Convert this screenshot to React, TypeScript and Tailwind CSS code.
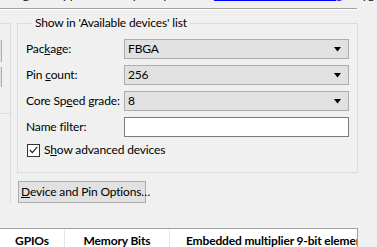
import React from "react";

const font = { fontFamily: 'Lato, "Noto Sans", Arial, sans-serif' };

function Combo({ value }: { value: string }) {
  return (
    <div className="flex h-[20px] w-[225px] items-center justify-between border border-[#adadad] bg-[#e1e1e1] pl-[3px] pr-[6px]">
      <span>{value}</span>
      <svg width="8" height="5" viewBox="0 0 8 5">
        <path d="M0 0H7L3.5 4.5Z" fill="#000" />
      </svg>
    </div>
  );
}

function Row({ label, children }: { label: React.ReactNode; children: React.ReactNode }) {
  return (
    <div className="flex items-center">
      <div className="w-[98px] shrink-0 whitespace-nowrap">{label}</div>
      {children}
    </div>
  );
}

export default function App() {
  return (
    <div
      className="h-[247px] w-[377px] overflow-hidden bg-[#f0f0f0] text-[12px] leading-[16px] tracking-[-0.15px] text-black"
      style={font}
    >
      {/* clipped line of text above */}
      <div className="h-[8px] overflow-hidden">
        <div className="-mt-[13px] flex whitespace-nowrap">
          <span>Using the supported family lis</span>
          <span className="ml-[3px] w-[60px]">try</span>
          <a className="text-[#0000ff] underline">Installation and Licensing</a>
          <span className="ml-[20px]">yg</span>
        </div>
      </div>
      <div className="h-px w-[357px] bg-[#a0a0a0]" />
      <div className="h-px w-[357px] bg-white" />

      <div className="flex h-[218px]">
        {/* left panel edges */}
        <div className="mt-[13px] w-[11px] shrink-0">
          <div className="h-[90px] border-r border-t border-[#dcdcdc]">
            <div className="mt-[16px] h-[22px] w-[2px] border-r border-[#adadad] bg-[#e1e1e1]" />
            <div className="mt-[5px] h-[20px] w-[2px] border-r border-[#adadad] bg-[#e1e1e1]" />
          </div>
          <div className="h-[90px] border-r border-t border-[#dcdcdc]" />
        </div>

        <div className="ml-[6px] flex flex-col">
          <fieldset className="mt-[5px] h-[158px] w-[341px] border border-[#dcdcdc] pl-[8px] pr-[8px]">
            <legend className="ml-[6px] whitespace-nowrap px-[3px]">Show in 'Available devices' list</legend>
            <div className="mt-[8px] flex flex-col gap-[6px]">
              <Row label={<>Pac<u>k</u>age:</>}>
                <Combo value="FBGA" />
              </Row>
              <Row label={<>Pin <u>c</u>ount:</>}>
                <Combo value="256" />
              </Row>
              <Row label={<>Core Sp<u>e</u>ed grade:</>}>
                <Combo value="8" />
              </Row>
              <Row label="Name filter:">
                <div className="h-[20px] w-[225px] border border-[#7a7a7a] bg-white" />
              </Row>
            </div>
            <div className="ml-[1px] mt-[5px] flex items-center">
              <div className="flex h-[13px] w-[13px] items-center justify-center border border-[#333] bg-white">
                <svg width="9" height="8" viewBox="0 0 9 8">
                  <path d="M0.8 4L3.3 6.6L8.3 0.8" fill="none" stroke="#222" strokeWidth="1.2" />
                </svg>
              </div>
              <span className="ml-[4px] whitespace-nowrap">
                S<u>h</u>ow advanced devices
              </span>
            </div>
          </fieldset>

          <button className="ml-[1px] mt-[8px] flex h-[22px] w-[128px] items-center whitespace-nowrap border border-[#adadad] bg-[#e1e1e1] pl-[2px]">
            <span>
              <u>D</u>evice and Pin Options…
            </span>
          </button>
        </div>
      </div>

      {/* table header */}
      <div className="flex h-[30px] w-[358px] border-r border-t border-[#a0a0a0] bg-white font-bold">
        <div className="flex w-[65px] shrink-0 justify-center border-r border-[#e5e5e5] pt-[4px]">GPIOs</div>
        <div className="flex w-[105px] shrink-0 justify-center border-r border-[#e5e5e5] pt-[4px]">Memory Bits</div>
        <div className="overflow-hidden whitespace-nowrap pl-[16px] pt-[4px]">Embedded multiplier 9-bit elements</div>
      </div>
    </div>
  );
}
